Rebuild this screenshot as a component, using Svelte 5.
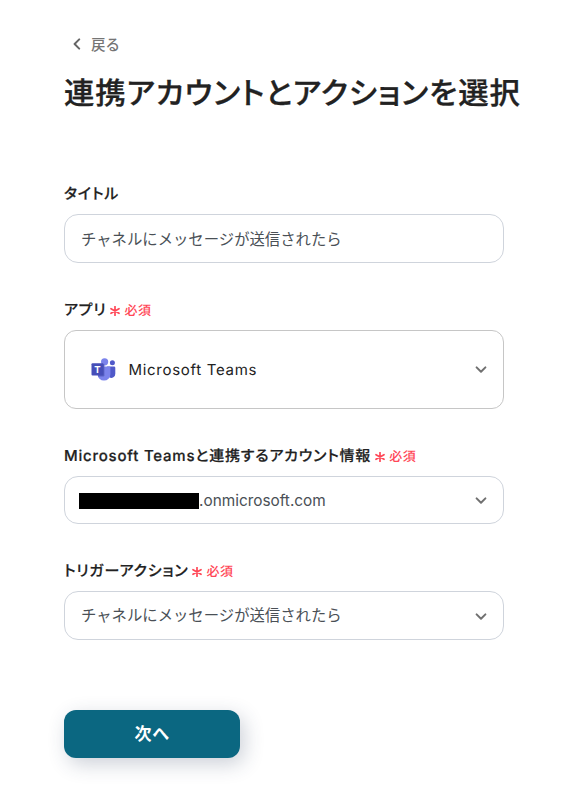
<script lang="ts">
	let title = 'チャネルにメッセージが送信されたら';
	let account = '.onmicrosoft.com';
	let action = 'チャネルにメッセージが送信されたら';
</script>

{#snippet chevron()}
	<svg class="chevron" width="14" height="10" viewBox="0 0 14 10">
		<path d="M2.6 2.4 L7 6.7 L11.4 2.4" />
	</svg>
{/snippet}

{#snippet required()}
	<span class="required">
		<svg width="10" height="10" viewBox="0 0 10 10">
			<path d="M5 0.6 V9.4 M1 2.7 L9 7.3 M9 2.7 L1 7.3" />
		</svg>
		必須
	</span>
{/snippet}

<main>
	<a class="back" href="#back">
		<svg width="8" height="12" viewBox="0 0 8 12"><path d="M6.2 1.4 L1.6 6 L6.2 10.6" /></svg>
		<span>戻る</span>
	</a>
	<h1>連携アカウントとアクションを選択</h1>

	<div class="field">
		<div class="label">タイトル</div>
		<div class="box"><span>{title}</span></div>
	</div>

	<div class="field">
		<div class="label">アプリ{@render required()}</div>
		<div class="box app">
			<svg class="teams" width="25" height="23" viewBox="0 0 25 23">
				<circle cx="21.4" cy="4.8" r="2.5" fill="#5059c9" />
				<path d="M16 8.4 h7 a1.3 1.3 0 0 1 1.3 1.3 v6 a4 4 0 0 1 -6 3.6 z" fill="#5059c9" />
				<circle cx="13.6" cy="3.8" r="3.6" fill="#7b83eb" />
				<path d="M7.5 8.4 h10.7 a1.2 1.2 0 0 1 1.2 1.2 v6.6 a6.4 6.4 0 0 1 -12.8 0 v-6.6 z" fill="#7b83eb" />
				<path d="M7 6.3 h6.4 v11 a1.2 1.2 0 0 1 -1.2 1.2 h-5 z" fill="#5a62c3" />
				<rect x="0.5" y="5.2" width="12" height="12.3" rx="1.1" fill="#464eb8" />
				<text x="6.5" y="14.6" text-anchor="middle">T</text>
			</svg>
			<span>Microsoft Teams</span>
			{@render chevron()}
		</div>
	</div>

	<div class="field">
		<div class="label">Microsoft Teamsと連携するアカウント情報{@render required()}</div>
		<div class="box account">
			<span class="mask"></span><span>{account}</span>
			{@render chevron()}
		</div>
	</div>

	<div class="field">
		<div class="label">トリガーアクション{@render required()}</div>
		<div class="box action">
			<span>{action}</span>
			{@render chevron()}
		</div>
	</div>

	<button>次へ</button>
</main>

<style>
	:global(body) {
		background-color: #fff;
	}
	main {
		padding: 33px 0 31px 64px;
		font-family: Inter, 'Noto Sans CJK JP', sans-serif;
		font-feature-settings: 'palt';
		letter-spacing: 0.04em;
		color: #222;
	}
	svg {
		flex: none;
		fill: none;
		stroke: none;
		stroke-linecap: round;
		stroke-linejoin: round;
	}
	.back {
		display: flex;
		align-items: center;
		gap: 10px;
		height: 22px;
		padding-left: 9px;
		font-size: 14.5px;
		font-weight: 500;
		color: #757575;
		text-decoration: none;
	}
	.back span {
		padding-bottom: 2px;
	}
	.back path {
		stroke: #666;
		stroke-width: 2;
	}
	h1 {
		margin: 15px 0 67px;
		font-size: 30.4px;
		font-weight: 500;
		line-height: 48px;
		letter-spacing: 0.9px;
		white-space: nowrap;
		text-rendering: geometricPrecision;
		-webkit-text-stroke: 0.3px #222;
	}
	.field {
		width: 440px;
		margin-bottom: 38px;
	}
	.label {
		display: flex;
		align-items: center;
		height: 16px;
		margin-bottom: 13px;
		font-size: 15px;
		font-weight: 500;
		letter-spacing: 0.78px;
		white-space: nowrap;
		text-rendering: geometricPrecision;
		-webkit-text-stroke: 0.2px #222;
	}
	.required {
		display: flex;
		align-items: center;
		gap: 4px;
		margin: 1px 0 0 4px;
		font-size: 13px;
		letter-spacing: 0.5px;
		color: #ff4757;
		-webkit-text-stroke: 0;
	}
	.required svg {
		margin-top: 2px;
	}
	.required path {
		stroke: #ff4757;
		stroke-width: 1.7;
	}
	.box {
		display: flex;
		align-items: center;
		box-sizing: border-box;
		height: 49px;
		padding: 0 15px 0 16px;
		border: 1px solid #cfd4dc;
		border-radius: 14px;
		font-size: 15.36px;
		font-feature-settings: normal;
		letter-spacing: 0;
		color: #4a5056;
		white-space: nowrap;
	}
	.box span {
		padding-bottom: 2px;
	}
	.app {
		height: 79px;
		padding-left: 26px;
		border-color: #c6c6c6;
		border-radius: 12px;
		font-size: 15px;
		letter-spacing: 0.7px;
		color: #222;
		text-rendering: geometricPrecision;
	}
	.app span {
		padding-bottom: 0;
	}
	.teams {
		margin-right: 12.5px;
	}
	.teams text {
		font-size: 9.5px;
		font-weight: 700;
		letter-spacing: 0;
		fill: #fff;
	}
	.account {
		height: 48px;
		padding-left: 14px;
	}
	.account span {
		padding-bottom: 0;
	}
	.account .mask {
		width: 120px;
		height: 16px;
		margin-top: 2px;
		background-color: #000;
	}
	.chevron {
		margin-left: auto;
	}
	.chevron path {
		stroke: #707070;
		stroke-width: 2;
	}
	.account .chevron {
		margin-top: 2px;
	}
	.action span {
		padding-bottom: 4px;
	}
	.action .chevron {
		margin-top: 3px;
	}
	button {
		display: block;
		width: 176px;
		height: 48px;
		margin-top: 70px;
		padding: 0 0 3px;
		border: 0;
		border-radius: 12px;
		background-color: #0b6781;
		box-shadow: 4px 6px 20px rgba(40, 60, 90, 0.24);
		font: inherit;
		font-size: 17px;
		font-weight: 600;
		letter-spacing: inherit;
		color: #fff;
	}
</style>
